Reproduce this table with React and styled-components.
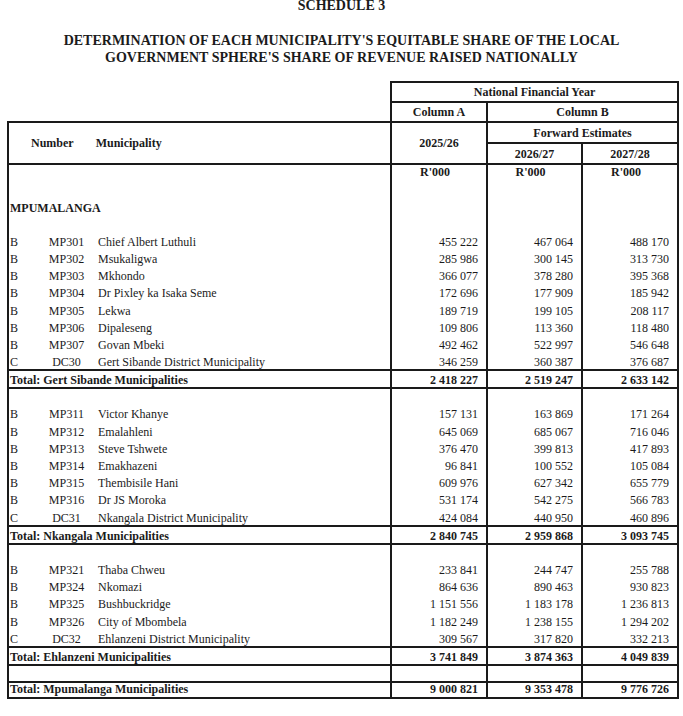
import React from 'react';
import styled, { createGlobalStyle } from 'styled-components';

const GlobalStyle = createGlobalStyle`
  html, body {
    margin: 0;
    padding: 0;
    background: #fff;
  }
  body {
    font-family: "Liberation Serif", "Times New Roman", serif;
    color: #1b1b1b;
  }
`;

const LINE = '2px solid #1a1a1a';

const Page = styled.div`
  width: 683px;
`;

const Heading = styled.h1`
  margin: 0;
  font-size: 14px;
  line-height: 12px;
  font-weight: bold;
  text-align: center;
`;

const Title = styled.h2`
  margin: 20px 0 0;
  font-size: 14px;
  line-height: 17px;
  font-weight: bold;
  text-align: center;
`;

const Table = styled.table`
  margin: 15px 0 0 7px;
  width: 670px;
  border-collapse: collapse;
  table-layout: fixed;
  font-size: 12px;
  line-height: 14px;
`;

const Row = styled.tr`
  height: ${({ $h }) => $h || 17.2}px;
`;

const Blank = styled.td`
  padding: 0;
  border: none;
`;

const HeadCell = styled.td`
  padding: 0;
  border: ${LINE};
  font-weight: bold;
  text-align: center;
  vertical-align: middle;
`;

const NumberHead = styled.div`
  display: flex;
  gap: 22px;
  padding-left: 22px;
  text-align: left;
`;

const BodyCell = styled.td`
  padding: ${({ $top }) => ($top === undefined ? 2 : $top)}px 0 0;
  vertical-align: top;
  white-space: nowrap;
`;

const Cat = styled(BodyCell)`
  padding-left: 1px;
  border-left: ${LINE};
`;

const Code = styled(BodyCell)`
  text-align: center;
`;

const Name = styled(BodyCell)`
  padding-left: 6px;
`;

const Label = styled(BodyCell)`
  padding-left: 1px;
  border-left: ${LINE};
  font-weight: bold;
`;

const Num = styled(BodyCell)`
  padding-right: 8px;
  border-left: ${LINE};
  border-right: ${LINE};
  text-align: ${({ $center }) => ($center ? 'center' : 'right')};
  font-weight: ${({ $bold }) => ($bold ? 'bold' : 'normal')};
`;

const TotalLabel = styled(Label)`
  line-height: 13px;
  border-top: ${LINE};
  border-bottom: ${LINE};
`;

const TotalNum = styled(Num)`
  line-height: 13px;
  border-top: ${LINE};
  border-bottom: ${LINE};
  font-weight: bold;
`;

const sections = [
  {
    total: 'Total: Gert Sibande Municipalities',
    sums: ['2 418 227', '2 519 247', '2 633 142'],
    rows: [
      ['B', 'MP301', 'Chief Albert Luthuli', '455 222', '467 064', '488 170'],
      ['B', 'MP302', 'Msukaligwa', '285 986', '300 145', '313 730'],
      ['B', 'MP303', 'Mkhondo', '366 077', '378 280', '395 368'],
      ['B', 'MP304', 'Dr Pixley ka Isaka Seme', '172 696', '177 909', '185 942'],
      ['B', 'MP305', 'Lekwa', '189 719', '199 105', '208 117'],
      ['B', 'MP306', 'Dipaleseng', '109 806', '113 360', '118 480'],
      ['B', 'MP307', 'Govan Mbeki', '492 462', '522 997', '546 648'],
      ['C', 'DC30', 'Gert Sibande District Municipality', '346 259', '360 387', '376 687'],
    ],
  },
  {
    total: 'Total: Nkangala Municipalities',
    sums: ['2 840 745', '2 959 868', '3 093 745'],
    rows: [
      ['B', 'MP311', 'Victor Khanye', '157 131', '163 869', '171 264'],
      ['B', 'MP312', 'Emalahleni', '645 069', '685 067', '716 046'],
      ['B', 'MP313', 'Steve Tshwete', '376 470', '399 813', '417 893'],
      ['B', 'MP314', 'Emakhazeni', '96 841', '100 552', '105 084'],
      ['B', 'MP315', 'Thembisile Hani', '609 976', '627 342', '655 779'],
      ['B', 'MP316', 'Dr JS Moroka', '531 174', '542 275', '566 783'],
      ['C', 'DC31', 'Nkangala District Municipality', '424 084', '440 950', '460 896'],
    ],
  },
  {
    total: 'Total: Ehlanzeni Municipalities',
    sums: ['3 741 849', '3 874 363', '4 049 839'],
    rows: [
      ['B', 'MP321', 'Thaba Chweu', '233 841', '244 747', '255 788'],
      ['B', 'MP324', 'Nkomazi', '864 636', '890 463', '930 823'],
      ['B', 'MP325', 'Bushbuckridge', '1 151 556', '1 183 178', '1 236 813'],
      ['B', 'MP326', 'City of Mbombela', '1 182 249', '1 238 155', '1 294 202'],
      ['C', 'DC32', 'Ehlanzeni District Municipality', '309 567', '317 820', '332 213'],
    ],
  },
];

const EmptyRow = () => (
  <Row>
    <Label colSpan={3} />
    <Num />
    <Num />
    <Num />
  </Row>
);

const TotalRow = ({ label, values, last }) => (
  <Row $h={last ? 16 : 18}>
    <TotalLabel colSpan={3} $top={last ? 0 : 3}>
      {label}
    </TotalLabel>
    {values.map((v, i) => (
      <TotalNum key={i} $top={last ? 0 : 3}>
        {v}
      </TotalNum>
    ))}
  </Row>
);

export default function App() {
  return (
    <Page>
      <GlobalStyle />
      <Heading>SCHEDULE 3</Heading>
      <Title>
        DETERMINATION OF EACH MUNICIPALITY'S EQUITABLE SHARE OF THE LOCAL
        <br />
        GOVERNMENT SPHERE'S SHARE OF REVENUE RAISED NATIONALLY
      </Title>
      <Table>
        <colgroup>
          <col style={{ width: 33 }} />
          <col style={{ width: 51 }} />
          <col style={{ width: 299 }} />
          <col style={{ width: 96 }} />
          <col style={{ width: 95 }} />
          <col style={{ width: 96 }} />
        </colgroup>
        <thead>
          <Row $h={20}>
            <Blank colSpan={3} />
            <HeadCell colSpan={3}>National Financial Year</HeadCell>
          </Row>
          <Row $h={20}>
            <Blank colSpan={3} />
            <HeadCell>Column A</HeadCell>
            <HeadCell colSpan={2}>Column B</HeadCell>
          </Row>
          <Row $h={21}>
            <HeadCell colSpan={3} rowSpan={2}>
              <NumberHead>
                <span>Number</span>
                <span>Municipality</span>
              </NumberHead>
            </HeadCell>
            <HeadCell rowSpan={2}>2025/26</HeadCell>
            <HeadCell colSpan={2}>Forward Estimates</HeadCell>
          </Row>
          <Row $h={21}>
            <HeadCell>2026/27</HeadCell>
            <HeadCell>2027/28</HeadCell>
          </Row>
        </thead>
        <tbody>
          <Row>
            <Label colSpan={3} />
            <Num $top={0} $center $bold>R'000</Num>
            <Num $top={0} $center $bold>R'000</Num>
            <Num $top={0} $center $bold>R'000</Num>
          </Row>
          <EmptyRow />
          <Row>
            <Label colSpan={3} $top={3}>MPUMALANGA</Label>
            <Num />
            <Num />
            <Num />
          </Row>
          {sections.map((s) => (
            <React.Fragment key={s.total}>
              <EmptyRow />
              {s.rows.map((r) => (
                <Row key={r[1]}>
                  <Cat>{r[0]}</Cat>
                  <Code>{r[1]}</Code>
                  <Name>{r[2]}</Name>
                  <Num>{r[3]}</Num>
                  <Num>{r[4]}</Num>
                  <Num>{r[5]}</Num>
                </Row>
              ))}
              <TotalRow label={s.total} values={s.sums} />
            </React.Fragment>
          ))}
          <EmptyRow />
          <TotalRow
            last
            label="Total: Mpumalanga Municipalities"
            values={['9 000 821', '9 353 478', '9 776 726']}
          />
        </tbody>
      </Table>
    </Page>
  );
}
